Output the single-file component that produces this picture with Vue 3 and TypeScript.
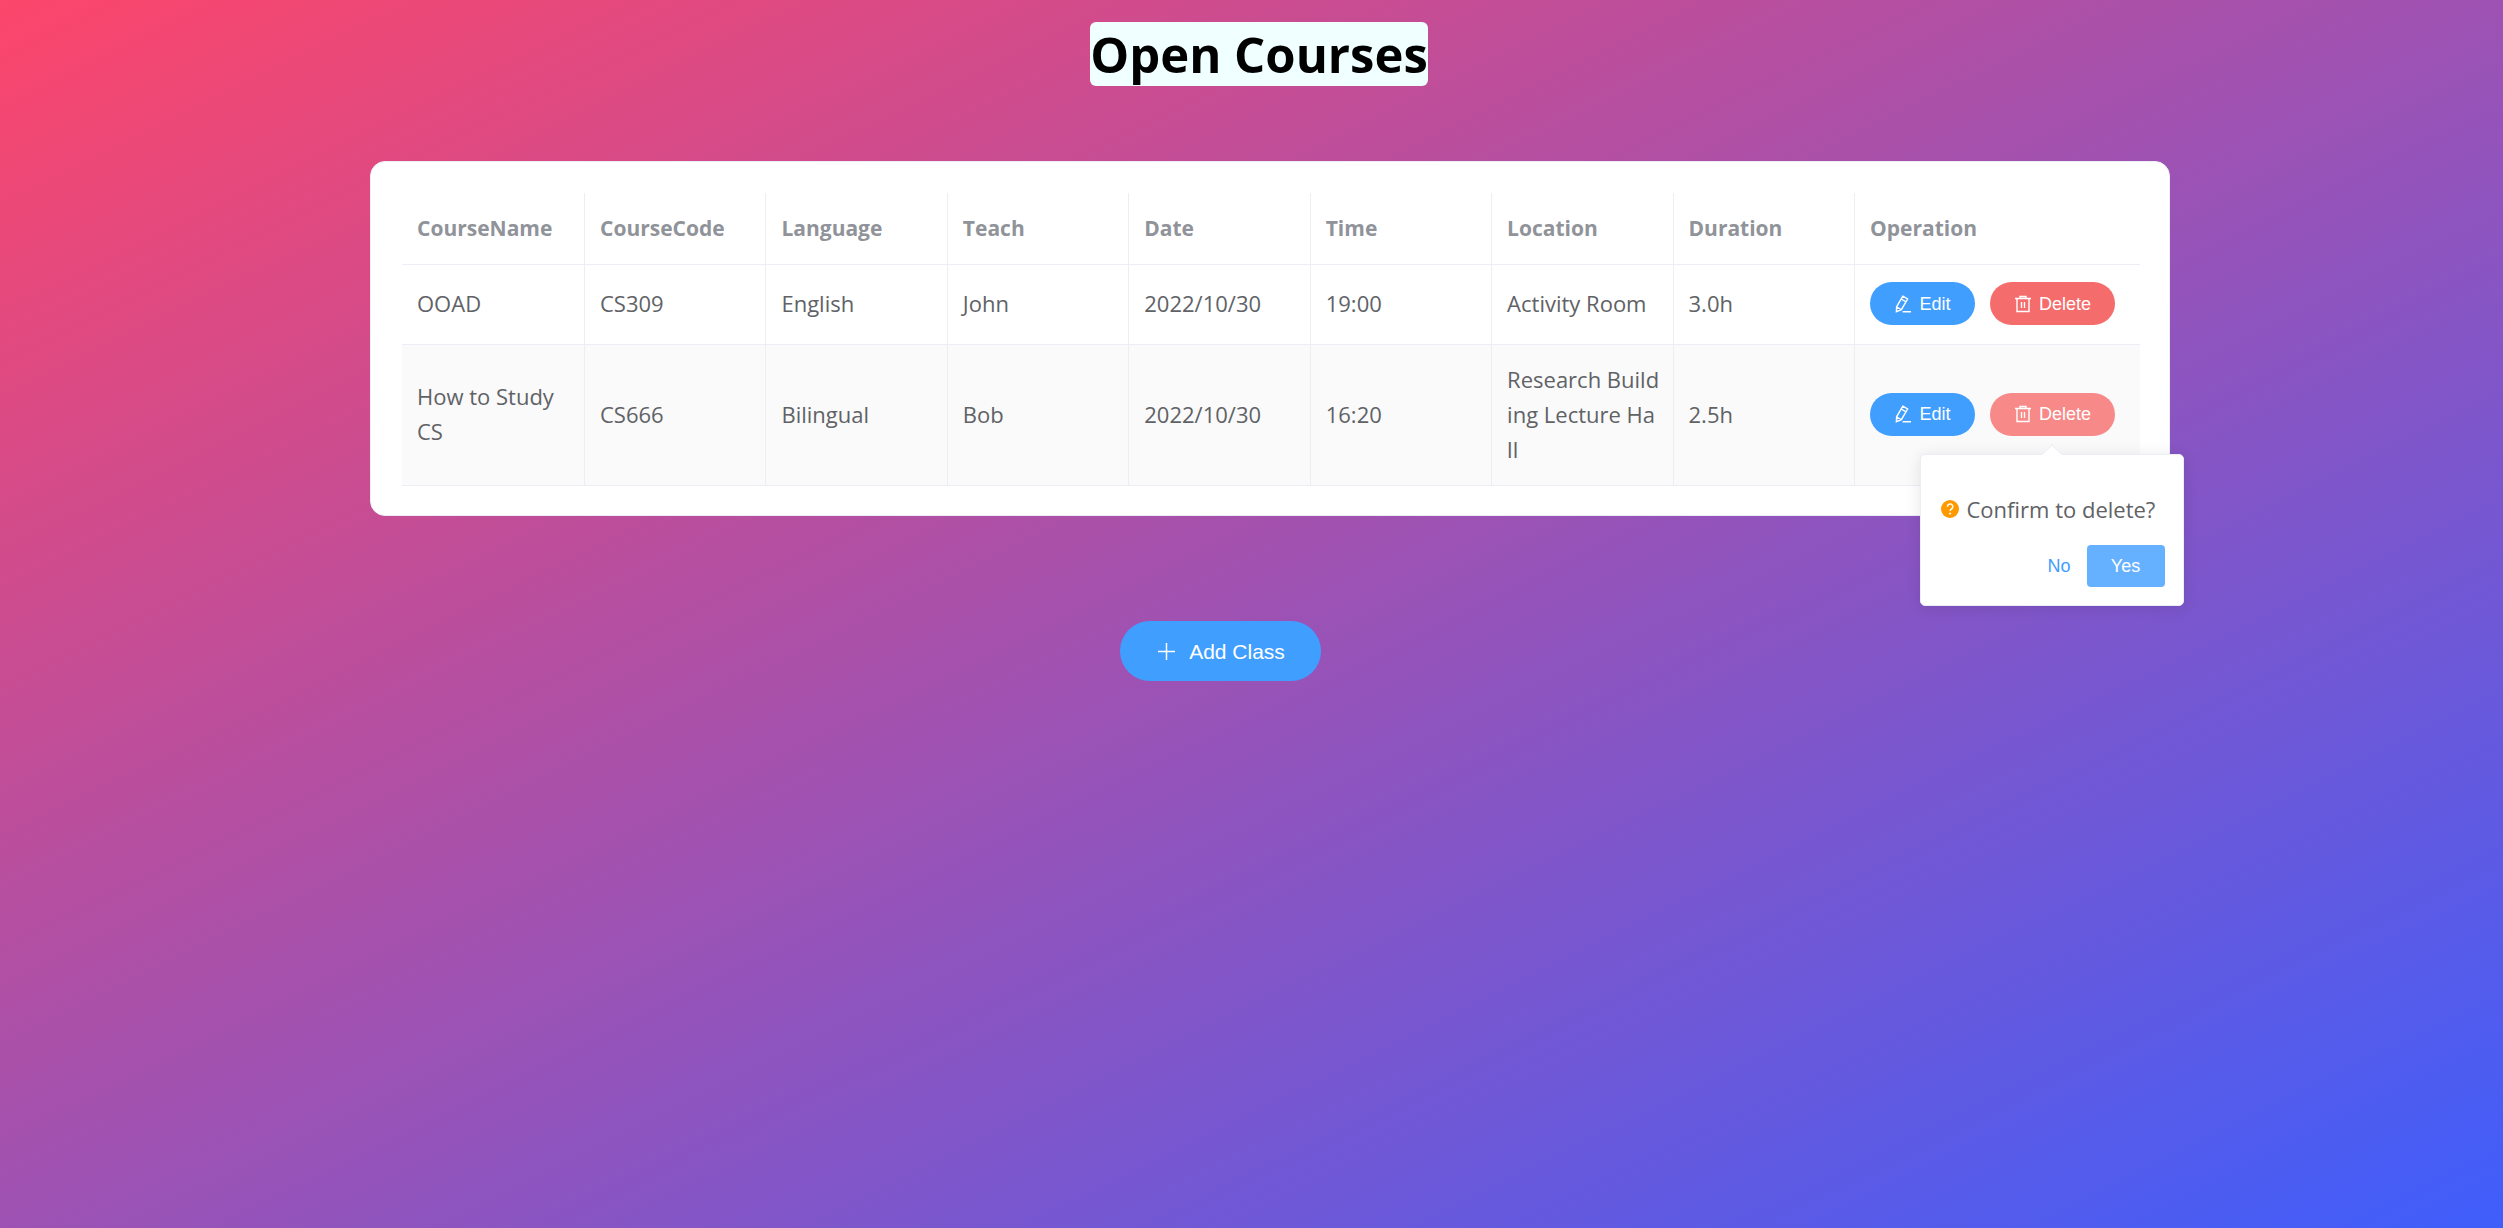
<script setup lang="ts">
import { ref } from 'vue'

interface Course {
  name: string
  code: string
  language: string
  teacher: string
  date: string
  time: string
  location: string
  duration: string
}

const headings: string[] = [
  'CourseName',
  'CourseCode',
  'Language',
  'Teach',
  'Date',
  'Time',
  'Location',
  'Duration',
  'Operation',
]

const courses = ref<Course[]>([
  {
    name: 'OOAD',
    code: 'CS309',
    language: 'English',
    teacher: 'John',
    date: '2022/10/30',
    time: '19:00',
    location: 'Activity Room',
    duration: '3.0h',
  },
  {
    name: 'How to Study CS',
    code: 'CS666',
    language: 'Bilingual',
    teacher: 'Bob',
    date: '2022/10/30',
    time: '16:20',
    location: 'Research Building Lecture Hall',
    duration: '2.5h',
  },
])

const confirming = ref<string | null>('CS666')

function askDelete(code: string): void {
  confirming.value = confirming.value === code ? null : code
}

function removeCourse(code: string): void {
  courses.value = courses.value.filter((course) => course.code !== code)
  confirming.value = null
}
</script>

<template>
  <main class="page">
    <header class="heading">
      <h1 class="title">Open Courses</h1>
    </header>

    <section class="card">
      <table class="courses">
        <colgroup>
          <col class="col-name" />
          <col v-for="n in 7" :key="n" />
          <col class="col-operation" />
        </colgroup>
        <thead>
          <tr>
            <th v-for="heading in headings" :key="heading" scope="col">{{ heading }}</th>
          </tr>
        </thead>
        <tbody>
          <tr v-for="course in courses" :key="course.code">
            <td class="words">{{ course.name }}</td>
            <td>{{ course.code }}</td>
            <td>{{ course.language }}</td>
            <td>{{ course.teacher }}</td>
            <td>{{ course.date }}</td>
            <td>{{ course.time }}</td>
            <td>{{ course.location }}</td>
            <td>{{ course.duration }}</td>
            <td>
              <div class="actions">
                <button type="button" class="pill edit">
                  <svg class="icon" viewBox="0 0 18 18" aria-hidden="true">
                    <path d="M8.8 1.2 13.6 4 7.4 14.6 2.4 16.6 2.6 11.8Z M7.2 4l4.8 2.8 M2.8 12l4.4 2.6 M8.6 16.8h8.4" />
                  </svg>
                  <span>Edit</span>
                </button>
                <div class="delete-wrap">
                  <button
                    type="button"
                    class="pill delete"
                    :class="{ active: confirming === course.code }"
                    @click="askDelete(course.code)"
                  >
                    <svg class="icon" viewBox="0 0 18 18" aria-hidden="true">
                      <path d="M1 3.5h16 M3 3.5v13h12v-13 M6 3.5v-2h6v2 M7.5 7v6 M10.5 7v6" />
                    </svg>
                    <span>Delete</span>
                  </button>
                  <div v-if="confirming === course.code" class="popover" role="dialog" aria-label="Confirm to delete?">
                    <span class="arrow"></span>
                    <p class="question">
                      <svg class="mark" viewBox="0 0 18 18" aria-hidden="true">
                        <circle cx="9" cy="9" r="9" fill="#ff9900" />
                        <path d="M6.4 6.7a2.7 2.7 0 1 1 4.3 2.1c-1 .7-1.6 1.1-1.6 2.1" fill="none" stroke="#fff" stroke-width="1.5" />
                        <circle cx="9.1" cy="13.4" r="1" fill="#fff" />
                      </svg>
                      <span>Confirm to delete?</span>
                    </p>
                    <div class="answers">
                      <button type="button" class="no" @click="confirming = null">No</button>
                      <button type="button" class="yes" @click="removeCourse(course.code)">Yes</button>
                    </div>
                  </div>
                </div>
              </div>
            </td>
          </tr>
        </tbody>
      </table>
    </section>

    <footer class="footer">
      <button type="button" class="add">
        <svg class="plus" viewBox="0 0 21 21" aria-hidden="true">
          <path d="M2 10.5h17 M10.5 2v17" />
        </svg>
        <span>Add Class</span>
      </button>
    </footer>
  </main>
</template>

<style>
body {
  margin: 0;
}
</style>

<style scoped>
.page {
  box-sizing: border-box;
  min-height: 100vh;
  padding-top: 22px;
  background: linear-gradient(to bottom right, #fc466b, #3f5efb);
  font-family: 'Open Sans', 'Noto Sans', sans-serif;
  font-size: 22px;
  line-height: 35px;
  color: #606266;
}

.heading {
  display: flex;
  justify-content: center;
  padding-left: 15px;
}

.title {
  width: 338px;
  margin: 0;
  border-radius: 6px;
  background: #f0ffff;
  color: #000;
  font-size: 49px;
  font-weight: 700;
  line-height: 64px;
  text-align: center;
  white-space: nowrap;
}

.card {
  margin: 75px 333px 0 370px;
  padding: 31px 29px 29px 31px;
  border: 1px solid #ebeef5;
  border-radius: 15px;
  background: #fff;
}

.courses {
  width: 100%;
  table-layout: fixed;
  border-collapse: separate;
  border-spacing: 0;
}

.col-name {
  width: 183px;
}

.col-operation {
  width: 285px;
}

th,
td {
  box-sizing: border-box;
  padding: 16px 13px 16px 15px;
  border-right: 1px solid #ebeef5;
  border-bottom: 1px solid #ebeef5;
  text-align: left;
  vertical-align: middle;
  word-break: break-all;
}

th:last-child,
td:last-child {
  border-right: 0;
}

th {
  height: 72px;
  color: #909399;
  font-size: 21px;
  font-weight: 700;
}

td {
  height: 80px;
  padding-top: 15px;
  padding-bottom: 17px;
}

.words {
  word-break: normal;
}

tbody tr:nth-child(even) td {
  height: 141px;
  background: #fafafa;
}

button {
  margin: 0;
  border: 0;
  font-family: 'Liberation Sans', Arial, sans-serif;
  font-size: 18px;
  line-height: 18px;
  color: #fff;
  white-space: nowrap;
  cursor: pointer;
}

.actions {
  display: flex;
  gap: 15px;
}

.pill {
  display: flex;
  align-items: center;
  justify-content: center;
  gap: 7px;
  height: 43px;
  padding: 0 24px;
  border-radius: 22px;
}

.edit {
  min-width: 105px;
  background: #409eff;
}

.delete {
  min-width: 125px;
  background: #f56c6c;
}

.delete.active {
  background: #f78989;
}

.icon {
  width: 18px;
  height: 18px;
  fill: none;
  stroke: currentColor;
  stroke-width: 1.4;
}

.delete-wrap {
  position: relative;
}

.popover {
  position: absolute;
  z-index: 1;
  top: 61px;
  left: 50%;
  box-sizing: border-box;
  width: 264px;
  margin-left: -133px;
  padding: 18px;
  border: 1px solid #ebeef5;
  border-radius: 5px;
  background: #fff;
  box-shadow: 0 2px 15px rgba(0, 0, 0, 0.1);
}

.arrow {
  position: absolute;
  top: -8px;
  left: 50%;
  box-sizing: border-box;
  width: 14px;
  height: 14px;
  margin-left: -7px;
  border-top: 1px solid #ebeef5;
  border-left: 1px solid #ebeef5;
  background: #fff;
  transform: rotate(45deg);
}

.question {
  display: flex;
  align-items: center;
  gap: 8px;
  margin: 19px 0 18px 2px;
  white-space: nowrap;
}

.mark {
  width: 18px;
  height: 18px;
}

.answers {
  display: flex;
  justify-content: flex-end;
  gap: 16px;
}

.no {
  padding: 0;
  background: none;
  color: #409eff;
}

.yes {
  width: 78px;
  height: 42px;
  border-radius: 4px;
  background: #66b1ff;
}

.footer {
  display: flex;
  justify-content: center;
  margin-top: 105px;
  padding-right: 62px;
}

.add {
  display: flex;
  align-items: center;
  justify-content: center;
  gap: 12px;
  height: 60px;
  padding: 0 36px;
  border-radius: 30px;
  background: #409eff;
  font-size: 21px;
  line-height: 21px;
}

.plus {
  width: 21px;
  height: 21px;
  fill: none;
  stroke: currentColor;
  stroke-width: 1.5;
}
</style>
